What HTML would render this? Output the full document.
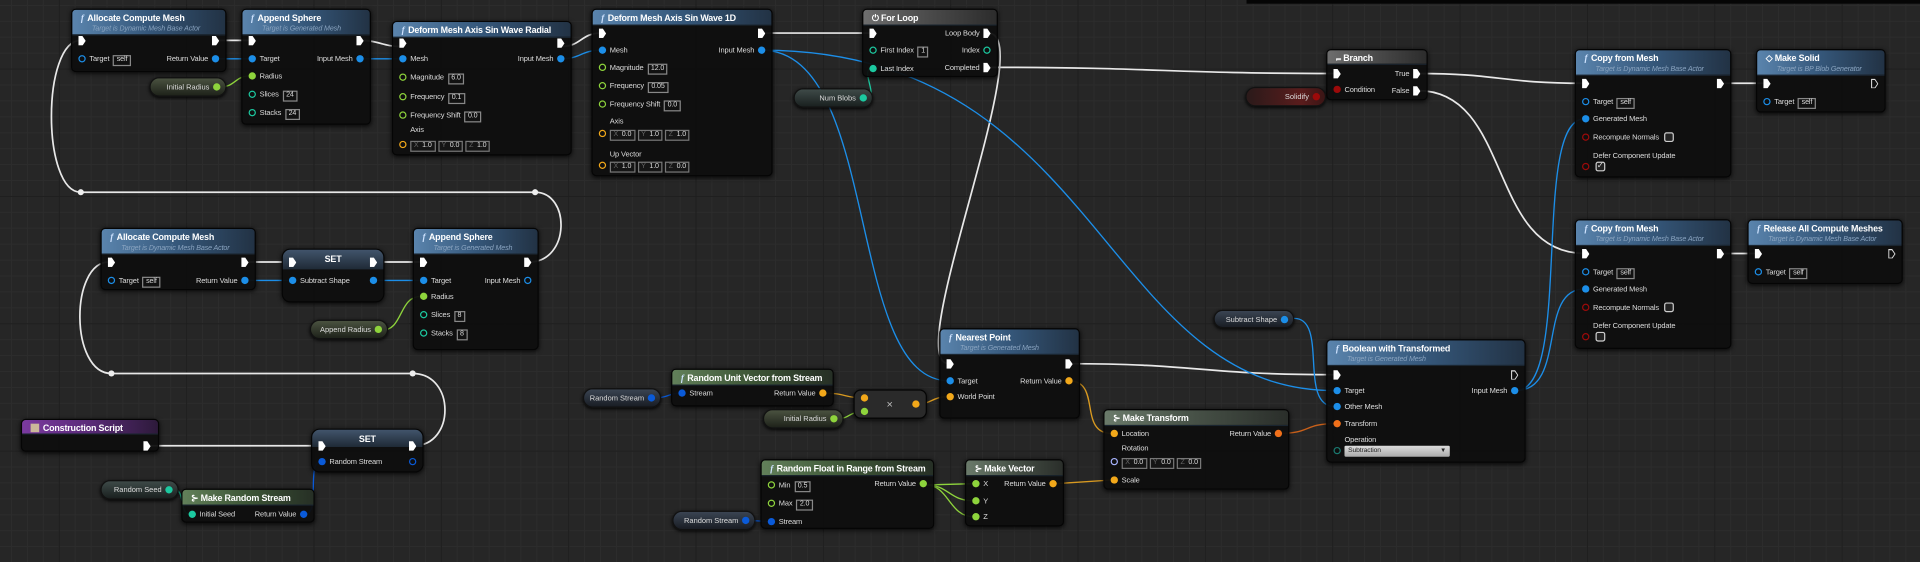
<!DOCTYPE html>
<html><head><meta charset="utf-8"><style>
*{box-sizing:border-box;margin:0;padding:0}
html,body{width:1920px;height:562px;overflow:hidden;background:#262626}
#c{position:absolute;left:0;top:0;width:1568px;height:459px;transform:scale(1.22449);transform-origin:0 0;font-family:"Liberation Sans",sans-serif;color:#ddd;
background-color:#262626;
background-image:linear-gradient(#1e1e1e 1px,transparent 1px),linear-gradient(90deg,#1e1e1e 1px,transparent 1px),linear-gradient(#2c2c2c 1px,transparent 1px),linear-gradient(90deg,#2c2c2c 1px,transparent 1px);
background-size:104px 104px,104px 104px,13px 13px,13px 13px;background-position:0 56px,48px 0,0 4px,9px 0}
.topbar{position:absolute;left:1018px;top:0;width:550px;height:3px;background:#050505}
svg{position:absolute;left:0;top:0}
.n{position:absolute;background:rgba(14,14,14,.95);border-radius:4px;border:1px solid #050505;box-shadow:0 1px 4px rgba(0,0,0,.8)}
.h{position:absolute;left:0;top:0;right:0;border-radius:3px 3px 0 0;background:linear-gradient(90deg,#5a84ad,#35577a 50%,#223244);padding:2px 0 0 7px;border-bottom:1px solid #1a2530}
.hg{background:linear-gradient(90deg,#62805a,#3d5536 50%,#262f25)}
.hgr{background:linear-gradient(90deg,#6e6e6e,#4a4a4a 50%,#2c2c2c)}
.hp{background:linear-gradient(90deg,#7b3aa0,#5a2a78 50%,#2d1a3a)}
.hs{background:linear-gradient(180deg,#41546b,#1f2a36);text-align:center;padding-left:0}
.t{font-size:7.3px;font-weight:bold;color:#fff;white-space:nowrap;line-height:10px;letter-spacing:-0.15px}
.t b{font-style:italic;font-family:"Liberation Serif",serif;color:#cfe3ff;margin-right:3px;font-weight:bold}
.s{font-size:5.8px;font-style:italic;color:#8aa4c0;white-space:nowrap;line-height:8px;padding-left:9px;letter-spacing:-0.1px}
.r{position:absolute;font-size:6.1px;line-height:10px;height:10px;white-space:nowrap;color:#dcdcdc;letter-spacing:-0.1px}
.L{left:5px}.R{right:5px}
.x{display:inline-block;width:6px;height:8px;background:#fff;clip-path:polygon(0 0,55% 0,100% 50%,55% 100%,0 100%);vertical-align:middle}
.xo{display:inline-block;width:6px;height:8px;vertical-align:middle;background:#ddd;clip-path:polygon(0 0,55% 0,100% 50%,55% 100%,0 100%,0 0,15% 12%,15% 88%,50% 88%,85% 50%,50% 12%,15% 12%)}
.p{display:inline-block;width:6px;height:6px;border-radius:50%;vertical-align:middle;margin:0 3px 1px 0}
.R .p{margin:0 0 1px 3px}
.o{background:transparent!important;border:1.3px solid}
.cb{background:#1c8ee8;border-color:#1c8ee8}
.cd{background:#0a5ad8;border-color:#0a5ad8}
.cg{background:#8ed43c;border-color:#8ed43c}
.ct{background:#1cc9a0;border-color:#1cc9a0}
.cy{background:#f2a81a;border-color:#f2a81a}
.co{background:#f0701a;border-color:#f0701a}
.cr{background:#9c0a0a;border-color:#9c0a0a}
.cv{background:#a8b4ff;border-color:#a8b4ff}
.ctl{background:#136;border-color:#1a7a70}
.b{display:inline-block;border:1px solid #888;padding:0 2px;font-size:5.8px;line-height:7px;margin-left:3px;color:#ddd;background:#111}
.v{display:inline-block;border:1px solid #777;padding:0 2px;font-size:5.8px;line-height:7px;margin-right:2px;color:#ddd;background:#151515}
.v i{color:#666;font-style:normal;margin-right:3px}
.ck{display:inline-block;width:8px;height:8px;border:1.3px solid #ccc;border-radius:2px;margin-left:4px;vertical-align:middle;background:#222}
.pill{position:absolute;height:16px;border-radius:8px;font-size:6.1px;line-height:16px;text-align:right;padding-right:4px;color:#ddd;white-space:nowrap;box-shadow:0 1px 3px #000;border:1px solid #111}
.pill .p{margin:0 0 1px 3px}
</style></head><body><div id="c">
<div class="topbar"></div>
<svg width="1568" height="459" fill="none" stroke-linecap="round">
<g stroke="#e8e8e8" stroke-width="1.4">
<path d="M176,33 L204,33"/><path d="M294,33 C310,33 312,38 328,38"/><path d="M458,38 C475,38 474,27 491,27"/><path d="M622,27 L712,27"/>
<path d="M807,55 C950,55 950,60 1090,60"/><path d="M1158,60 C1225,60 1225,68 1294,68"/><path d="M1158,74 C1235,74 1215,207 1294,207"/>
<path d="M1405,68 L1442,68"/><path d="M1405,207 L1435,207"/>
<path d="M807,27 C850,27 735,297 775,297"/><path d="M873,297 C980,297 980,306 1090,306"/>
<path d="M432,214 C466,214 466,157 437,157 L66,157 C34,157 34,33 66,33"/>
<path d="M338,364 C372,364 372,305 337,305 L91,305 C57,305 57,214 89,214"/>
<path d="M119,364 L262,364"/><path d="M200,214 L238,214"/><path d="M306,214 L344,214"/>
</g>
<g stroke="#1c8ee8" stroke-width="1.1">
<path d="M176,48 L204,48"/><path d="M294,48 L328,48"/><path d="M458,48 C475,48 474,41 491,41"/>
<path d="M622,41 C720,41 690,311 775,311"/><path d="M622,41 C900,41 900,319 1090,319"/>
<path d="M1238,319 C1285,319 1250,97 1294,97"/><path d="M1238,319 C1280,319 1255,236 1294,236"/>
<path d="M1057,260 C1085,260 1060,332 1090,332"/>
<path d="M200,229 L238,229"/><path d="M306,229 L344,229"/>
</g>
<g stroke="#0a5ad8" stroke-width="1.1"><path d="M249,420 C262,420 250,377 262,377"/><path d="M535,325 C546,325 546,321 556,321"/><path d="M612,425 L629,426"/></g>
<g stroke="#8ed43c" stroke-width="1.1"><path d="M180,71 C192,71 192,62 204,62"/><path d="M311,270 C330,270 325,242 344,242"/><path d="M683,342 C695,342 693,336 705,336"/>
<path d="M756,396 L795,395"/><path d="M756,396 C775,396 775,409 795,409"/><path d="M756,396 C775,396 775,422 795,422"/></g>
<g stroke="#1cc9a0" stroke-width="1.1"><path d="M708,80 C718,80 702,56 712,56"/><path d="M141,399 C152,399 146,420 155,420"/></g>
<g stroke="#d99a20" stroke-width="1.1"><path d="M673,321 C690,321 690,325 705,325"/><path d="M748,330 C762,330 760,324 775,324"/><path d="M873,311 C900,311 880,354 908,354"/><path d="M862,395 L908,392"/></g>
<path d="M1045,354 C1070,354 1065,346 1090,346" stroke="#c8601a" stroke-width="1.1"/>
<path d="M1078,80 C1085,80 1083,73 1090,73" stroke="#9c0a0a" stroke-width="1.1"/>
<g fill="#eee"><circle cx="66" cy="157" r="2.5"/><circle cx="437" cy="157" r="2.5"/><circle cx="91" cy="305" r="2.5"/><circle cx="337" cy="305" r="2.5"/></g>
</svg>

<div class="n" style="left:58px;top:7px;width:127px;height:52px"><div class="h" style="height:21px"><div class="t"><b>f</b>Allocate Compute Mesh</div><div class="s">Target is Dynamic Mesh Base Actor</div></div>
<div class="r L" style="top:21px"><i class="x"></i></div><div class="r R" style="top:21px"><i class="x"></i></div>
<div class="r L" style="top:36px"><i class="p o cb"></i>Target<span class="b">self</span></div><div class="r R" style="top:36px">Return Value<i class="p cb"></i></div></div>
<div class="n" style="left:197px;top:7px;width:106px;height:95px"><div class="h" style="height:21px"><div class="t"><b>f</b>Append Sphere</div><div class="s">Target is Generated Mesh</div></div>
<div class="r L" style="top:21px"><i class="x"></i></div><div class="r R" style="top:21px"><i class="x"></i></div>
<div class="r L" style="top:36px"><i class="p cb"></i>Target</div><div class="r R" style="top:36px">Input Mesh<i class="p cb"></i></div>
<div class="r L" style="top:50px"><i class="p cg"></i>Radius</div>
<div class="r L" style="top:65px"><i class="p o ct"></i>Slices<span class="b">24</span></div>
<div class="r L" style="top:80px"><i class="p o ct"></i>Stacks<span class="b">24</span></div></div>
<div class="pill" style="left:122px;top:63px;width:63px;background:linear-gradient(180deg,#4a5240,#1e221a)">Initial Radius<i class="p cg"></i></div>
<div class="n" style="left:320px;top:17px;width:147px;height:110px"><div class="h" style="height:13px"><div class="t"><b>f</b>Deform Mesh Axis Sin Wave Radial</div></div>
<div class="r L" style="top:13px"><i class="x"></i></div><div class="r R" style="top:13px"><i class="x"></i></div>
<div class="r L" style="top:26px"><i class="p cb"></i>Mesh</div><div class="r R" style="top:26px">Input Mesh<i class="p cb"></i></div>
<div class="r L" style="top:41px"><i class="p o cg"></i>Magnitude<span class="b">6.0</span></div>
<div class="r L" style="top:57px"><i class="p o cg"></i>Frequency<span class="b">0.1</span></div>
<div class="r L" style="top:72px"><i class="p o cg"></i>Frequency Shift<span class="b">0.0</span></div>
<div class="r" style="left:14px;top:84px">Axis</div>
<div class="r L" style="top:96px"><i class="p o cy"></i><span class="v"><i>X</i>1.0</span><span class="v"><i>Y</i>0.0</span><span class="v"><i>Z</i>1.0</span></div></div>
<div class="n" style="left:483px;top:7px;width:148px;height:137px"><div class="h" style="height:13px"><div class="t"><b>f</b>Deform Mesh Axis Sin Wave 1D</div></div>
<div class="r L" style="top:15px"><i class="x"></i></div><div class="r R" style="top:15px"><i class="x"></i></div>
<div class="r L" style="top:29px"><i class="p cb"></i>Mesh</div><div class="r R" style="top:29px">Input Mesh<i class="p cb"></i></div>
<div class="r L" style="top:43px"><i class="p o cg"></i>Magnitude<span class="b">12.0</span></div>
<div class="r L" style="top:58px"><i class="p o cg"></i>Frequency<span class="b">0.05</span></div>
<div class="r L" style="top:73px"><i class="p o cg"></i>Frequency Shift<span class="b">0.0</span></div>
<div class="r" style="left:14px;top:87px">Axis</div>
<div class="r L" style="top:97px"><i class="p o cy"></i><span class="v"><i>X</i>0.0</span><span class="v"><i>Y</i>1.0</span><span class="v"><i>Z</i>1.0</span></div>
<div class="r" style="left:14px;top:114px">Up Vector</div>
<div class="r L" style="top:123px"><i class="p o cy"></i><span class="v"><i>X</i>1.0</span><span class="v"><i>Y</i>1.0</span><span class="v"><i>Z</i>0.0</span></div></div>
<div class="n" style="left:704px;top:7px;width:111px;height:56px"><div class="h hgr" style="height:13px"><div class="t">⏻ For Loop</div></div>
<div class="r L" style="top:15px"><i class="x"></i></div><div class="r R" style="top:15px">Loop Body<i class="x" style="margin-left:3px"></i></div>
<div class="r L" style="top:29px"><i class="p o ct"></i>First Index<span class="b">1</span></div><div class="r R" style="top:29px">Index<i class="p o ct"></i></div>
<div class="r L" style="top:44px"><i class="p ct"></i>Last Index</div><div class="r R" style="top:43px">Completed<i class="x" style="margin-left:3px"></i></div></div>
<div class="pill" style="left:648px;top:72px;width:65px;background:linear-gradient(180deg,#3e4a48,#1a201f)">Num Blobs<i class="p ct"></i></div>
<div class="n" style="left:1083px;top:40px;width:83px;height:42px"><div class="h hgr" style="height:12px"><div class="t">&#x2AED; Branch</div></div>
<div class="r L" style="top:15px"><i class="x"></i></div><div class="r R" style="top:15px">True<i class="x" style="margin-left:3px"></i></div>
<div class="r L" style="top:28px"><i class="p cr"></i>Condition</div><div class="r R" style="top:29px">False<i class="x" style="margin-left:3px"></i></div></div>
<div class="pill" style="left:1017px;top:71px;width:66px;background:linear-gradient(90deg,#2a1a1a,#5a1c1c 70%,#3a1515)">Solidify<i class="p cr"></i></div>
<div class="n" style="left:1286px;top:40px;width:128px;height:105px"><div class="h" style="height:21px"><div class="t"><b>f</b>Copy from Mesh</div><div class="s">Target is Dynamic Mesh Base Actor</div></div>
<div class="r L" style="top:23px"><i class="x"></i></div><div class="r R" style="top:23px"><i class="x"></i></div>
<div class="r L" style="top:38px"><i class="p o cb"></i>Target<span class="b">self</span></div>
<div class="r L" style="top:52px"><i class="p cb"></i>Generated Mesh</div>
<div class="r L" style="top:67px"><i class="p o cr"></i>Recompute Normals<span class="ck"></span></div>
<div class="r" style="left:14px;top:82px">Defer Component Update</div>
<div class="r L" style="top:91px"><i class="p o cr"></i><span class="ck" style="margin-left:2px;font-size:7px;line-height:5px;color:#ddd">✓</span></div></div>
<div class="n" style="left:1434px;top:40px;width:106px;height:52px"><div class="h" style="height:21px"><div class="t">◇ Make Solid</div><div class="s">Target is BP Blob Generator</div></div>
<div class="r L" style="top:23px"><i class="x"></i></div><div class="r R" style="top:23px"><i class="xo"></i></div>
<div class="r L" style="top:38px"><i class="p o cb"></i>Target<span class="b">self</span></div></div>
<div class="n" style="left:1286px;top:179px;width:128px;height:106px"><div class="h" style="height:21px"><div class="t"><b>f</b>Copy from Mesh</div><div class="s">Target is Dynamic Mesh Base Actor</div></div>
<div class="r L" style="top:23px"><i class="x"></i></div><div class="r R" style="top:23px"><i class="x"></i></div>
<div class="r L" style="top:38px"><i class="p o cb"></i>Target<span class="b">self</span></div>
<div class="r L" style="top:52px"><i class="p cb"></i>Generated Mesh</div>
<div class="r L" style="top:67px"><i class="p o cr"></i>Recompute Normals<span class="ck"></span></div>
<div class="r" style="left:14px;top:82px">Defer Component Update</div>
<div class="r L" style="top:91px"><i class="p o cr"></i><span class="ck" style="margin-left:2px"></span></div></div>
<div class="n" style="left:1427px;top:179px;width:127px;height:53px"><div class="h" style="height:21px"><div class="t"><b>f</b>Release All Compute Meshes</div><div class="s">Target is Dynamic Mesh Base Actor</div></div>
<div class="r L" style="top:23px"><i class="x"></i></div><div class="r R" style="top:23px"><i class="xo"></i></div>
<div class="r L" style="top:38px"><i class="p o cb"></i>Target<span class="b">self</span></div></div>
<div class="n" style="left:82px;top:186px;width:127px;height:51px"><div class="h" style="height:21px"><div class="t"><b>f</b>Allocate Compute Mesh</div><div class="s">Target is Dynamic Mesh Base Actor</div></div>
<div class="r L" style="top:23px"><i class="x"></i></div><div class="r R" style="top:23px"><i class="x"></i></div>
<div class="r L" style="top:38px"><i class="p o cb"></i>Target<span class="b">self</span></div><div class="r R" style="top:38px">Return Value<i class="p cb"></i></div></div>
<div class="n" style="left:230px;top:203px;width:84px;height:44px;border-radius:7px"><div class="h hs" style="height:16px;border-radius:6px 6px 0 0;border:none"><div class="t" style="line-height:12px">SET</div></div>
<div class="r L" style="top:6px"><i class="x"></i></div><div class="r R" style="top:6px"><i class="x"></i></div>
<div class="r L" style="top:21px"><i class="p cb"></i>Subtract Shape</div><div class="r R" style="top:21px"><i class="p cb"></i></div></div>
<div class="n" style="left:337px;top:186px;width:103px;height:100px"><div class="h" style="height:21px"><div class="t"><b>f</b>Append Sphere</div><div class="s">Target is Generated Mesh</div></div>
<div class="r L" style="top:23px"><i class="x"></i></div><div class="r R" style="top:23px"><i class="x"></i></div>
<div class="r L" style="top:38px"><i class="p cb"></i>Target</div><div class="r R" style="top:38px">Input Mesh<i class="p o cb"></i></div>
<div class="r L" style="top:51px"><i class="p cg"></i>Radius</div>
<div class="r L" style="top:66px"><i class="p o ct"></i>Slices<span class="b">8</span></div>
<div class="r L" style="top:81px"><i class="p o ct"></i>Stacks<span class="b">8</span></div></div>
<div class="pill" style="left:253px;top:261px;width:64px;background:linear-gradient(180deg,#4a5240,#1e221a)">Append Radius<i class="p cg"></i></div>
<div class="n" style="left:17px;top:342px;width:113px;height:27px"><div class="h hp" style="height:12px"><div class="t"><span style="display:inline-block;width:7px;height:7px;background:#cbb79a;margin-right:3px;vertical-align:-1px"></span>Construction Script</div></div>
<div class="r R" style="top:17px;right:6px"><i class="x"></i></div></div>
<div class="n" style="left:254px;top:350px;width:92px;height:36px;border-radius:7px"><div class="h hs" style="height:14px;border-radius:6px 6px 0 0;border:none"><div class="t" style="line-height:11px">SET</div></div>
<div class="r L" style="top:9px"><i class="x"></i></div><div class="r R" style="top:9px"><i class="x"></i></div>
<div class="r L" style="top:22px"><i class="p cd"></i>Random Stream</div><div class="r R" style="top:22px"><i class="p o cd"></i></div></div>
<div class="pill" style="left:82px;top:392px;width:64px;background:linear-gradient(180deg,#3e4a48,#1a201f)">Random Seed<i class="p ct"></i></div>
<div class="n" style="left:148px;top:399px;width:109px;height:28px"><div class="h hg" style="height:13px"><div class="t">⊱ Make Random Stream</div></div>
<div class="r L" style="top:16px"><i class="p ct"></i>Initial Seed</div><div class="r R" style="top:16px">Return Value<i class="p cd"></i></div></div>
<div class="pill" style="left:476px;top:317px;width:64px;background:linear-gradient(180deg,#3a4452,#191d24)">Random Stream<i class="p cd"></i></div>
<div class="n" style="left:548px;top:301px;width:133px;height:31px"><div class="h hg" style="height:13px"><div class="t"><b>f</b>Random Unit Vector from Stream</div></div>
<div class="r L" style="top:15px"><i class="p cd"></i>Stream</div><div class="r R" style="top:15px">Return Value<i class="p cy"></i></div></div>
<div class="n" style="left:697px;top:318px;width:60px;height:24px;border-radius:6px;background:#2a2a2a"><div class="r L" style="top:2px"><i class="p cy"></i></div><div class="r L" style="top:13px"><i class="p cg"></i></div>
<div class="r" style="left:26px;top:6px;font-size:9px;color:#bbb">×</div><div class="r R" style="top:7px"><i class="p cy"></i></div></div>
<div class="pill" style="left:623px;top:334px;width:66px;background:linear-gradient(180deg,#4a5240,#1e221a)">Initial Radius<i class="p cg"></i></div>
<div class="n" style="left:767px;top:268px;width:115px;height:74px"><div class="h" style="height:21px"><div class="t"><b>f</b>Nearest Point</div><div class="s">Target is Generated Mesh</div></div>
<div class="r L" style="top:24px"><i class="x"></i></div><div class="r R" style="top:24px"><i class="x"></i></div>
<div class="r L" style="top:38px"><i class="p cb"></i>Target</div><div class="r R" style="top:38px">Return Value<i class="p cy"></i></div>
<div class="r L" style="top:51px"><i class="p cy"></i>World Point</div></div>
<div class="n" style="left:901px;top:334px;width:152px;height:66px"><div class="h hg" style="height:13px;background:linear-gradient(90deg,#6a7a6a,#465046 50%,#2a2e2a)"><div class="t">⊱ Make Transform</div></div>
<div class="r L" style="top:15px"><i class="p cy"></i>Location</div><div class="r R" style="top:15px">Return Value<i class="p co"></i></div>
<div class="r" style="left:14px;top:27px">Rotation</div>
<div class="r L" style="top:38px"><i class="p o cv"></i><span class="v"><i>X</i>0.0</span><span class="v"><i>Y</i>0.0</span><span class="v"><i>Z</i>0.0</span></div>
<div class="r L" style="top:53px"><i class="p cy"></i>Scale</div></div>
<div class="n" style="left:1083px;top:277px;width:163px;height:101px"><div class="h" style="height:21px"><div class="t"><b>f</b>Boolean with Transformed</div><div class="s">Target is Generated Mesh</div></div>
<div class="r L" style="top:24px"><i class="x"></i></div><div class="r R" style="top:24px"><i class="xo"></i></div>
<div class="r L" style="top:37px"><i class="p cb"></i>Target</div><div class="r R" style="top:37px">Input Mesh<i class="p cb"></i></div>
<div class="r L" style="top:50px"><i class="p cb"></i>Other Mesh</div>
<div class="r L" style="top:64px"><i class="p co"></i>Transform</div>
<div class="r" style="left:14px;top:77px">Operation</div>
<div class="r L" style="top:86px"><i class="p o ctl"></i><span style="display:inline-block;width:86px;height:9px;background:linear-gradient(#ddd,#aaa);color:#222;font-size:5.5px;line-height:9px;padding-left:3px;border-radius:1px;vertical-align:middle;position:relative">Subtraction<span style="position:absolute;right:3px;font-size:5px">▼</span></span></div></div>
<div class="pill" style="left:991px;top:253px;width:66px;height:15px;line-height:15px;background:linear-gradient(180deg,#3a4452,#191d24)">Subtract Shape<i class="p cb"></i></div>
<div class="n" style="left:621px;top:375px;width:142px;height:57px"><div class="h hg" style="height:13px"><div class="t"><b>f</b>Random Float in Range from Stream</div></div>
<div class="r L" style="top:16px"><i class="p o cg"></i>Min<span class="b">0.5</span></div><div class="r R" style="top:15px">Return Value<i class="p cg"></i></div>
<div class="r L" style="top:31px"><i class="p o cg"></i>Max<span class="b">2.0</span></div>
<div class="r L" style="top:46px"><i class="p cd"></i>Stream</div></div>
<div class="n" style="left:788px;top:375px;width:81px;height:55px"><div class="h hg" style="height:13px;background:linear-gradient(90deg,#6a7a6a,#465046 50%,#2a2e2a)"><div class="t">⊱ Make Vector</div></div>
<div class="r L" style="top:15px"><i class="p cg"></i>X</div><div class="r R" style="top:15px">Return Value<i class="p cy"></i></div>
<div class="r L" style="top:29px"><i class="p cg"></i>Y</div>
<div class="r L" style="top:42px"><i class="p cg"></i>Z</div></div>
<div class="pill" style="left:549px;top:417px;width:68px;background:linear-gradient(180deg,#3a4452,#191d24)">Random Stream<i class="p cd"></i></div>
</div></body></html>
